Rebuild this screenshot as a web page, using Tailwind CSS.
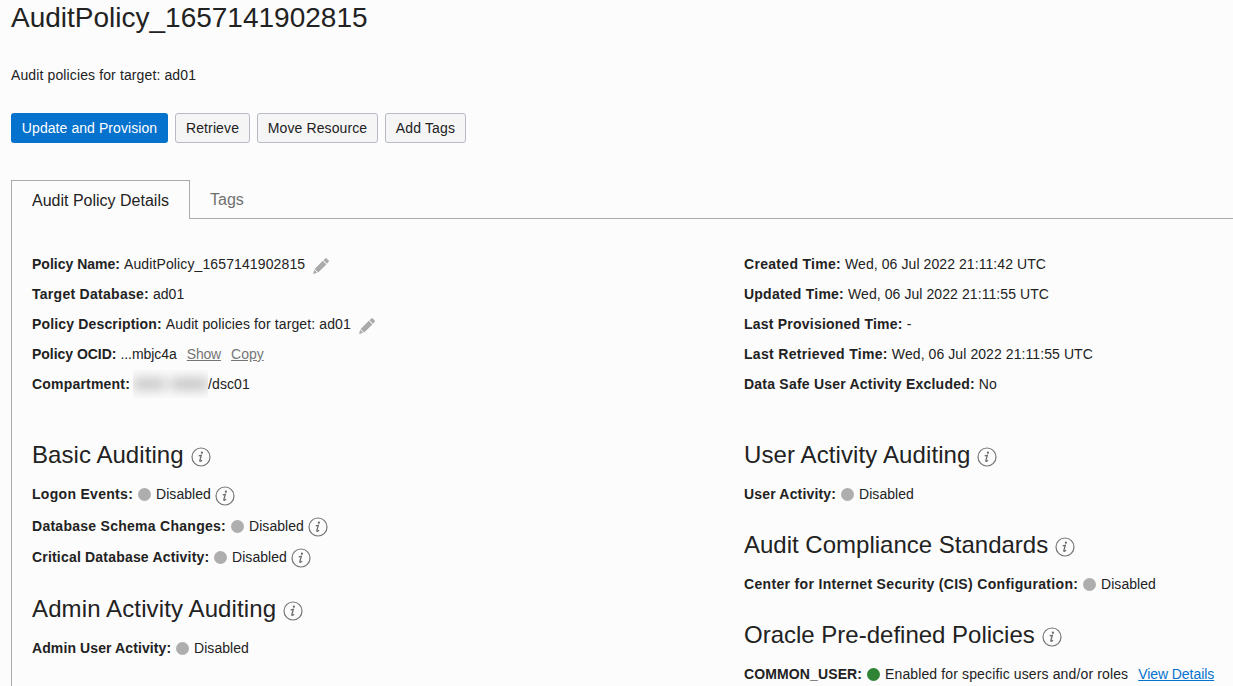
<!DOCTYPE html>
<html lang="en">
<head>
<meta charset="utf-8">
<title>AuditPolicy_1657141902815</title>
<script src="https://cdn.jsdelivr.net/npm/@tailwindcss/browser@4"></script>
</head>
<body class="h-[686px] overflow-hidden bg-[#fcfcfc] pl-[11px] font-['Liberation_Sans',Arial,sans-serif] text-sm text-[#222]">
<svg class="hidden">
  <symbol id="info" viewBox="0 0 20 20">
    <circle cx="10" cy="10" r="9" fill="none" stroke="#767676" stroke-width="1.2"/>
    <circle cx="10.900" cy="5.700" r="1.100" fill="#666"/>
    <path d="M7.700 8.900l2.600-.5-1.400 5q-.2 1.200.7.800l1.500-1" fill="none" stroke="#6a6a6a" stroke-width="1.300"/>
  </symbol>
  <symbol id="pencil" viewBox="0 0 16 16">
    <path d="M0 16l1.200-4.200 3 3zM1.600 11L9.800 2.800l3.600 3.600L5.200 14.500zM10.400 2.200L12.300.4q.7-.6 1.300 0l2.100 2.100q.6.6 0 1.300L14 5.700z" fill="#aaa"/>
  </symbol>
</svg>
<h1 class="h-[36px] text-[28px] leading-9">AuditPolicy_1657141902815</h1>
<p class="mt-[29px] h-5 leading-5 tracking-[.12px]">Audit policies for target: ad01</p>
<div class="mt-[28px] flex h-[30px] gap-[7px] whitespace-nowrap">
  <button class="w-[157px] rounded-[3px] bg-[#0572ce] tracking-[.07px] text-white">Update and Provision</button>
  <button class="w-[75px] rounded-[3px] border border-[#b6bac2] bg-[#f5f5f5] tracking-[.12px]">Retrieve</button>
  <button class="w-[121px] rounded-[3px] border border-[#b6bac2] bg-[#f5f5f5] tracking-[.1px]">Move Resource</button>
  <button class="w-[81px] rounded-[3px] border border-[#b6bac2] bg-[#f5f5f5] tracking-[.15px]">Add Tags</button>
</div>
<nav class="mt-[37px] flex h-[39px] text-base">
  <div class="w-[179px] border-x border-t border-[#aaa] pl-5 leading-[39px]">Audit Policy Details</div>
  <div class="flex-1 border-b border-[#aaa] pl-5 leading-[39px] text-[#707070]">Tags</div>
</nav>
<main class="flex h-[500px] border-l border-[#aaa] pt-[30px] pl-5">
  <section class="w-[712px]">
    <div class="flex h-[30px] items-center gap-1"><b>Policy Name:</b><span class="tracking-[.12px]">AuditPolicy_1657141902815</span><svg class="mt-1 ml-1 size-4"><use href="#pencil"/></svg></div>
    <div class="flex h-[30px] items-center gap-1"><b class="tracking-[.28px]">Target Database:</b><span>ad01</span></div>
    <div class="flex h-[30px] items-center gap-1"><b class="tracking-[.16px]">Policy Description:</b><span class="tracking-[.12px]">Audit policies for target: ad01</span><svg class="mt-1 ml-1 size-4"><use href="#pencil"/></svg></div>
    <div class="flex h-[30px] items-center gap-1"><b class="tracking-[-.03px]">Policy OCID:</b><span class="tracking-[-.05px]">...mbjc4a</span><a class="ml-1.5 tracking-[-.2px] text-[#767676] underline">Show</a><a class="ml-1.5 text-[#767676] underline">Copy</a></div>
    <div class="flex h-[30px] items-center"><b class="w-[98px] tracking-[.2px]">Compartment:</b><span class="ml-[3px] flex h-7 w-[75px] items-center overflow-hidden"><span class="flex h-3 w-full gap-1.5 blur-[6px]"><span class="w-8 bg-[#c4c4c4]"></span><span class="flex-1 bg-[#c2c2c2]"></span></span></span><span class="tracking-[.1px]">/dsc01</span></div>
    <h2 class="mt-[38px] flex h-9 items-center gap-[7px] text-2xl tracking-[.06px]">Basic Auditing<svg class="mt-1 size-5"><use href="#info"/></svg></h2>
    <div class="mt-1.5 flex h-[30px] items-center gap-1"><b class="w-[101.5px] tracking-[.3px]">Logon Events:</b><i class="mt-px mr-[1.5px] size-[13px] rounded-full bg-[#aeaeae]"></i><span class="tracking-[.06px]">Disabled</span><svg class="mt-1 size-5"><use href="#info"/></svg></div>
    <div class="mt-0.5 flex h-[30px] items-center gap-1"><b class="w-[194.5px] tracking-[.27px]">Database Schema Changes:</b><i class="mr-[1.5px] size-[13px] rounded-full bg-[#aeaeae]"></i><span class="tracking-[.06px]">Disabled</span><svg class="mt-0.5 size-5"><use href="#info"/></svg></div>
    <div class="mt-px flex h-[30px] items-center gap-1"><b class="w-[177.5px] tracking-[.19px]">Critical Database Activity:</b><i class="mr-[1.5px] size-[13px] rounded-full bg-[#aeaeae]"></i><span class="tracking-[.06px]">Disabled</span><svg class="mt-0.5 size-5"><use href="#info"/></svg></div>
    <h2 class="mt-[19px] flex h-9 items-center gap-[7px] text-2xl tracking-[.12px]">Admin Activity Auditing<svg class="mt-1 size-5"><use href="#info"/></svg></h2>
    <div class="mt-1.5 flex h-[30px] items-center gap-1"><b class="w-[139.5px] tracking-[.1px]">Admin User Activity:</b><i class="mt-px mr-[1.5px] size-[13px] rounded-full bg-[#aeaeae]"></i><span class="tracking-[.06px]">Disabled</span></div>
  </section>
  <section class="flex-1 whitespace-nowrap">
    <div class="flex h-[30px] items-center gap-1"><b class="tracking-[.3px]">Created Time:</b><span class="tracking-[.08px]">Wed, 06 Jul 2022 21:11:42 UTC</span></div>
    <div class="flex h-[30px] items-center gap-1"><b class="tracking-[.23px]">Updated Time:</b><span class="tracking-[.08px]">Wed, 06 Jul 2022 21:11:55 UTC</span></div>
    <div class="flex h-[30px] items-center gap-1"><b class="tracking-[.22px]">Last Provisioned Time:</b><span>-</span></div>
    <div class="flex h-[30px] items-center gap-1"><b class="tracking-[.32px]">Last Retrieved Time:</b><span class="tracking-[.08px]">Wed, 06 Jul 2022 21:11:55 UTC</span></div>
    <div class="flex h-[30px] items-center gap-1"><b class="tracking-[.22px]">Data Safe User Activity Excluded:</b><span>No</span></div>
    <h2 class="mt-[38px] flex h-9 items-center gap-1.5 text-2xl tracking-[.11px]">User Activity Auditing<svg class="mt-1 size-5"><use href="#info"/></svg></h2>
    <div class="mt-1.5 flex h-[30px] items-center gap-1"><b class="w-[92.5px] tracking-[.17px]">User Activity:</b><i class="mt-px mr-[1.5px] size-[13px] rounded-full bg-[#aeaeae]"></i><span class="tracking-[.06px]">Disabled</span></div>
    <h2 class="mt-[18px] flex h-9 items-center gap-[7px] text-2xl">Audit Compliance Standards<svg class="mt-1 size-5"><use href="#info"/></svg></h2>
    <div class="mt-1.5 flex h-[30px] items-center gap-1"><b class="w-[334.5px] tracking-[.33px]">Center for Internet Security (CIS) Configuration:</b><i class="mt-px mr-[1.5px] size-[13px] rounded-full bg-[#aeaeae]"></i><span class="tracking-[.06px]">Disabled</span></div>
    <h2 class="mt-[18px] flex h-9 items-center gap-[7px] text-2xl">Oracle Pre-defined Policies<svg class="mt-1 size-5"><use href="#info"/></svg></h2>
    <div class="mt-1.5 flex h-[30px] items-center gap-1"><b class="w-[118.5px] tracking-[.12px]">COMMON_USER:</b><i class="mt-px mr-[1.5px] size-[13px] rounded-full bg-[#2f8435]"></i><span class="tracking-[.13px]">Enabled for specific users and/or roles</span><a class="ml-1.5 tracking-[-.07px] text-[#0572ce] underline">View Details</a></div>
  </section>
</main>
</body>
</html>
